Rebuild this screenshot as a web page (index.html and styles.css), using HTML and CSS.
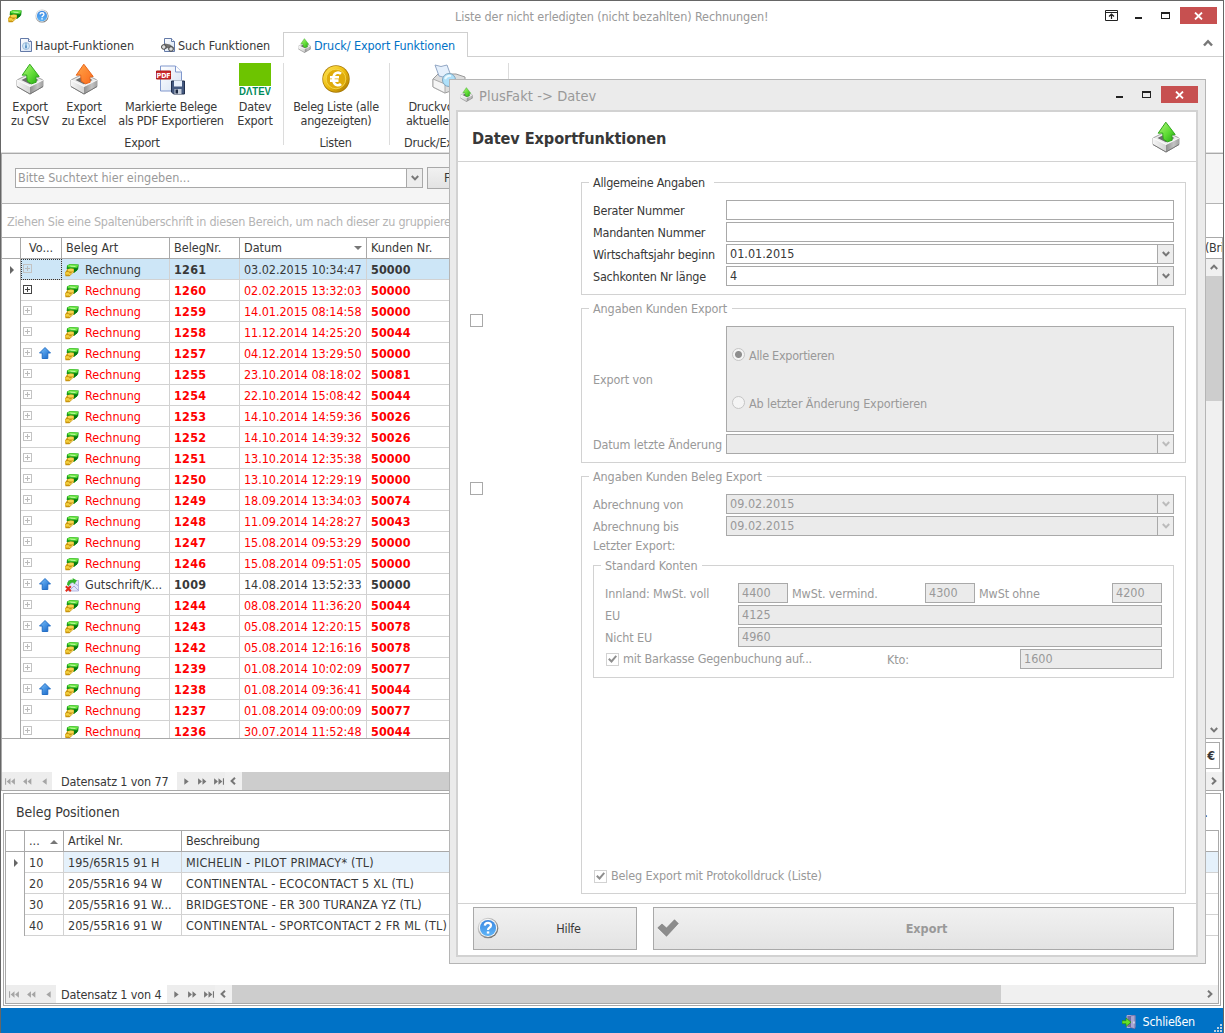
FILE: index.html
```html
<!DOCTYPE html>
<html lang="de">
<head>
<meta charset="utf-8">
<title>Liste der nicht erledigten Rechnungen</title>
<link rel="stylesheet" href="styles.css">
</head>
<body>
<svg class="defs" aria-hidden="true">
  <defs>
    <linearGradient id="gGreen" x1="0" y1="0" x2="1" y2="1"><stop offset="0" stop-color="#b4f57c"/><stop offset=".55" stop-color="#5fdc35"/><stop offset="1" stop-color="#23a512"/></linearGradient>
    <linearGradient id="gOrange" x1="0" y1="0" x2="1" y2="1"><stop offset="0" stop-color="#ffa64a"/><stop offset="1" stop-color="#fb6b1c"/></linearGradient>
    <linearGradient id="gBlue" x1="0" y1="0" x2="0" y2="1"><stop offset="0" stop-color="#3c87e0"/><stop offset="1" stop-color="#5db4f8"/></linearGradient>
    <linearGradient id="gArrow" x1="0" y1="0" x2="1" y2="1"><stop offset="0" stop-color="#7cc4ff"/><stop offset="1" stop-color="#1161c4"/></linearGradient>
    <linearGradient id="gGold" x1="0" y1="0" x2="1" y2="1"><stop offset="0" stop-color="#ffe65a"/><stop offset=".5" stop-color="#edbb0c"/><stop offset="1" stop-color="#a87400"/></linearGradient>
    <linearGradient id="gTray" x1="0" y1="0" x2="1" y2="0"><stop offset="0" stop-color="#8f8f8f"/><stop offset=".6" stop-color="#c4c4c4"/><stop offset="1" stop-color="#a0a0a0"/></linearGradient>
    <linearGradient id="gTrayL" x1="0" y1="0" x2="1" y2="0"><stop offset="0" stop-color="#f6f6f6"/><stop offset="1" stop-color="#d4d4d4"/></linearGradient>
    <linearGradient id="gRim" x1="0" y1="0" x2="1" y2="1"><stop offset="0" stop-color="#ececec"/><stop offset="1" stop-color="#5c5c5c"/></linearGradient>
    <linearGradient id="gPage" x1="0" y1="0" x2="1" y2="1"><stop offset="0" stop-color="#ffffff"/><stop offset="1" stop-color="#d5e1f3"/></linearGradient>
  </defs>
  <symbol id="tray" viewBox="0 0 28 32">
    <path d="M1 17 14 10.500 27 17v6.500L14 31 1 23.500z" fill="#ececec" stroke="#8a8a8a" stroke-width=".8"/>
    <path d="M14 23.500V31l13-7.500V17z" fill="url(#gTray)"/>
    <path d="M1 17v6.500L14 31v-7.500z" fill="url(#gTrayL)"/>
    <path d="M5.500 17 14 12.800l8.500 4.200-8.500 4.300z" fill="#6d6d6d"/>
    <path d="M1 17 14 23.500 27 17" fill="none" stroke="#fff" stroke-width=".9"/>
    <path d="M1 23.500 14 31 27 23.500" fill="none" stroke="#6f6f6f" stroke-width=".9"/>
  </symbol>
  <symbol id="export-green" viewBox="0 0 28 32">
    <use href="#tray"/><path d="M13.800 1.200 23.200 13.500 19.800 14l.4 5.200-4.700 1.600-4.200-2.600-.6-6.200-4.500.2z" fill="url(#gGreen)" stroke="#31a81c"/>
  </symbol>
  <symbol id="export-orange" viewBox="0 0 28 32">
    <use href="#tray"/><path d="M13.800 1.200 23.200 13.500 19.800 14l.4 5.200-4.700 1.600-4.200-2.600-.6-6.200-4.500.2z" fill="url(#gOrange)" stroke="#e8651b"/>
  </symbol>
  <symbol id="money" viewBox="0 0 14 14">
    <path d="M2 2.500 5 1l8.700.5-.5 4.500L9 10 1.700 6z" fill="#16971b"/>
    <path d="M2.300 2.500 5.200 1.200l8.200.5L12 4.800 3.300 4.200z" fill="#67e53f"/>
    <path d="M4.500 2.500 11 2.900 10 4.100 6 3.800z" fill="#b9f79b"/>
    <path d="M9 5.500h4l-1 2L9 9.500z" fill="#067a11"/>
    <path d="M0 9.500 2.500 6 8.500 5.500 9 9l-4.500 4.300L.5 13.200z" fill="#c8930d"/>
    <ellipse cx="5.800" cy="6.900" rx="3.100" ry="1.500" fill="#f5d551"/>
    <ellipse cx="2.500" cy="10.400" rx="2.200" ry="1.300" fill="#f3ce3d"/>
    <path d="M4 11.500q2.500-.3 4-2.800" stroke="#f8dd6a" fill="none"/>
  </symbol>
  <symbol id="credit" viewBox="0 0 14 14">
    <path d="M3.500 2.500h10V13h-10z" fill="#e4e6fb" stroke="#a6a8dc" stroke-width=".8"/>
    <path d="M3 7.500 8 4l5.500 4M4 13l5-5 5 5" fill="none" stroke="#a9acdc"/>
    <path d="M2 7Q2 1.500 8 1.500L7.500 0 12 2.500 9 6.500 8.500 4.500Q5 4 4 8z" fill="#35b62b"/>
    <path d="m.8 8.200 5 5M5.800 8.200l-5 5" stroke="#e22a17" stroke-width="2"/>
  </symbol>
  <symbol id="up" viewBox="0 0 12 12"><path d="M6 .5 11.500 6H8.800v5.500H3.200V6H.5z" fill="url(#gArrow)" stroke="#1a68c2" stroke-width=".9"/></symbol>
  <symbol id="help" viewBox="0 0 24 24">
    <circle cx="12" cy="12" r="11.300" fill="url(#gRim)"/><circle cx="12" cy="11.800" r="10" fill="#f6f6f6"/><circle cx="12" cy="12" r="8.800" fill="url(#gBlue)"/>
    <path d="M8.500 9.300Q8.800 6.300 12 6.300t3.300 2.800Q15.300 10.700 13.500 11.700 12 12.600 12 14.300" fill="none" stroke="#fff" stroke-width="2.400"/><path d="M10.700 15.700h2.700v2.400h-2.700z" fill="#fff"/>
  </symbol>
  <symbol id="doc-info" viewBox="0 0 12 14"><path d="M.5.500h8l3 3v10H.5z" fill="url(#gPage)" stroke="#647aa8"/><path d="M8.500.5v3h3" fill="#fff" stroke="#647aa8"/><circle cx="6" cy="8" r="3.500" fill="#d3e9f9" stroke="#8fb0d0" stroke-width=".8"/><path d="M6 7.300v3M6 5.500v1" stroke="#1863a8" stroke-width="1.200"/></symbol>
  <symbol id="doc-search" viewBox="0 0 15 14"><path d="M3.500.500h7l3 3v10h-10z" fill="url(#gPage)" stroke="#647aa8"/><path d="M10.500.5v3h3" fill="#fff" stroke="#647aa8"/><path d="M.5 8 4 5.500 9 6.500l4 3-1 3-3-.5-2-2-3 1z" fill="#717171"/><circle cx="2.800" cy="9" r="2.300" fill="#ddd" stroke="#444"/><circle cx="10" cy="11" r="2.300" fill="#ddd" stroke="#444"/></symbol>
  <symbol id="pdf" viewBox="0 0 30 30">
    <path d="M4.500 1.500h15l6 6v19h-21z" fill="url(#gPage)" stroke="#8198cd"/><path d="M19.500 1.500v6h6" fill="#fff" stroke="#8198cd"/>
    <path d="M.5 6.500h14v8H.5z" fill="#ce2b2b" stroke="#a91d1d"/><text x="7.600" y="13" class="pdf-text">PDF</text>
    <path d="M15.500 16.500h13v13h-11l-2-2z" fill="#44597f" stroke="#22304e"/><path d="M18 16h8v6h-8z" fill="#e8f0fb"/><path d="M18.500 24.500h7v5h-7z" fill="#c6cedb"/><path d="M19.500 25h2.500v4h-2.500z" fill="#1c2841"/>
  </symbol>
  <symbol id="euro" viewBox="0 0 28 28">
    <circle cx="14" cy="14" r="13.700" fill="#a97a05"/><circle cx="14" cy="14" r="12.900" fill="url(#gGold)"/><circle cx="14" cy="14" r="9.800" fill="#e0ac0b" stroke="#f8dc55" stroke-width=".8"/>
    <path d="M19 8.800Q17.500 7.400 15.200 7.700 11.300 8.300 11.300 14t4 6.200Q17.700 20.400 19 19M8 12.300h9M8 15.600h8.500" fill="none" stroke="#fff" stroke-width="2.600"/>
  </symbol>
  <symbol id="preview" viewBox="0 0 34 30">
    <path d="M1 15 6 10h18l9 3v9L13 29 1 23z" fill="#ddd" stroke="#999"/><path d="M1 15 13 20v9L1 23z" fill="#f5f5f5" stroke="#aaa"/><path d="M3 1Q9 4 15 1l4 11q-6 3-12 0z" fill="#e5f0fc" stroke="#91a6c4"/>
    <path d="m21 20 10 7" stroke="#666" stroke-width="3"/><circle cx="17" cy="16" r="6.500" fill="#aee0f9" stroke="#7ea4be"/><path d="M13 15q2-4 6-3" fill="none" stroke="#eaf9ff" stroke-width="2"/>
  </symbol>
  <symbol id="door" viewBox="0 0 14 14"><path d="M5 .5h8v12H5z" fill="#716fa6" stroke="#aaa9d2"/><path d="M8.500 1 13 0v14l-4.500-1.500z" fill="#a9a6d1" stroke="#5b5892" stroke-width=".6"/><path d="M12 6.500v2" stroke="#fff"/><path d="M0 5.700h4V3l5 4.200-5 4.300V8.700H0z" fill="#65df27" stroke="#258c0d" stroke-width=".7"/></symbol>
  <symbol id="chev-down" viewBox="0 0 8 6"><path d="M.8 1 4 4.400 7.200 1" fill="none" stroke="currentColor" stroke-width="2"/></symbol>
  <symbol id="chev-up" viewBox="0 0 8 6"><path d="M.8 5 4 1.600 7.200 5" fill="none" stroke="currentColor" stroke-width="2"/></symbol>
  <symbol id="chev-left" viewBox="0 0 6 8"><path d="M5 .8 1.600 4 5 7.200" fill="none" stroke="currentColor" stroke-width="2"/></symbol>
  <symbol id="chev-right" viewBox="0 0 6 8"><path d="M1 .8 4.400 4 1 7.200" fill="none" stroke="currentColor" stroke-width="2"/></symbol>
  <symbol id="nav-first" viewBox="0 0 10 6"><path d="M.5 0v6" stroke="currentColor"/><path d="M5 0v6L1.500 3zM9 0v6L5.500 3z" fill="currentColor"/></symbol>
  <symbol id="nav-pageback" viewBox="0 0 10 6"><path d="M4.500 0v6L1 3zM8.500 0v6L5 3z" fill="currentColor"/></symbol>
  <symbol id="nav-prev" viewBox="0 0 10 6"><path d="M7 0v6L3 3z" fill="currentColor"/></symbol>
  <symbol id="nav-next" viewBox="0 0 10 6"><path d="M3 0v6l4-3z" fill="currentColor"/></symbol>
  <symbol id="nav-pagenext" viewBox="0 0 10 6"><path d="M1 0v6l3.500-3zM5 0v6l3.500-3z" fill="currentColor"/></symbol>
  <symbol id="nav-last" viewBox="0 0 10 6"><path d="M9.500 0v6" stroke="currentColor"/><path d="M1 0v6l3.500-3zM5 0v6l3.500-3z" fill="currentColor"/></symbol>
  <symbol id="x" viewBox="0 0 9 8"><path d="m1 .6 7 6.800M8 .6 1 7.400" stroke="#fff" stroke-width="1.900"/></symbol>
  <symbol id="check" viewBox="0 0 9 8"><path d="m.8 3.800 2.700 2.700L8.300.8" fill="none" stroke="#8e8e8e" stroke-width="2"/></symbol>
</svg>

<main class="window">
  <header class="titlebar">
    <svg class="t-money"><use href="#money"/></svg>
    <svg class="t-help"><use href="#help"/></svg>
    <h1>Liste der nicht erledigten (nicht bezahlten) Rechnungen!</h1>
    <svg class="t-pin" viewBox="0 0 13 11"><path d="M.5.500h12v10H.5zM0 2.500h13" fill="none" stroke="#222"/><path d="M6.500 9V4M4 6.500 6.500 4 9 6.500" fill="none" stroke="#222" stroke-width="1.200"/></svg>
    <span class="min"></span><span class="max"></span>
    <span class="close"><svg><use href="#x"/></svg></span>
  </header>

  <nav class="tabs">
    <span class="tab tab-main"><svg class="i12"><use href="#doc-info"/></svg><b>Haupt-Funktionen</b></span>
    <span class="tab tab-search"><svg class="i15"><use href="#doc-search"/></svg><b>Such Funktionen</b></span>
    <span class="tab tab-active"><svg class="i13"><use href="#export-green"/></svg><b>Druck/ Export Funktionen</b></span>
    <span class="tabs-rest"><svg class="collapse"><use href="#chev-up"/></svg></span>
  </nav>

  <section class="ribbon">
    <div class="rgroup g-export">
      <div class="rbuttons">
        <div class="rbtn w54"><svg class="i-tray"><use href="#export-green"/></svg>Export<br>zu CSV</div>
        <div class="rbtn w54"><svg class="i-tray"><use href="#export-orange"/></svg>Export<br>zu Excel</div>
        <div class="rbtn w120"><svg class="i-pdf"><use href="#pdf"/></svg>Markierte Belege<br>als PDF Exportieren</div>
        <div class="rbtn w48"><svg class="i-datev" viewBox="0 0 32 32"><path d="M0 0h32v23H0z" fill="#6dc400"/><text x="0" y="31.800" textLength="32" lengthAdjust="spacingAndGlyphs" class="datev-text">DΛTEV</text></svg>Datev<br>Export</div>
      </div>
      <div class="rcaption">Export</div>
    </div>
    <div class="rgroup g-lists">
      <div class="rbuttons"><div class="rbtn w104"><svg class="i-euro"><use href="#euro"/></svg>Beleg Liste (alle<br>angezeigten)</div></div>
      <div class="rcaption">Listen</div>
    </div>
    <div class="rgroup g-print">
      <div class="rbuttons"><div class="rbtn w118"><svg class="i-preview"><use href="#preview"/></svg>Druckvorschau<br>aktuelle Ansicht</div></div>
      <div class="rcaption">Druck/Export</div>
    </div>
  </section>

  <section class="search">
    <div class="combo search-box"><span class="ph">Bitte Suchtext hier eingeben...</span><span class="drop"><svg><use href="#chev-down"/></svg></span></div>
    <button class="find">Finden</button>
  </section>
  <div class="groupby">Ziehen Sie eine Spaltenüberschrift in diesen Bereich, um nach dieser zu gruppieren.</div>

  <section class="grid">
    <div class="ghead">
      <span class="c0"></span><span class="c1">Vo...</span><span class="c2">Beleg Art</span><span class="c3">BelegNr.</span><span class="c4">Datum<i class="tri-down"></i></span><span class="c5">Kunden Nr.</span><span class="c6">(Bri</span>
    </div>
    <div class="gbody">
      <div class="rows" id="rows"></div>
      <div class="vscroll"><svg><use href="#chev-up"/></svg><i class="vthumb"></i><svg><use href="#chev-down"/></svg></div>
    </div>
    <div class="summary"><span>€</span></div>
    <div class="pager">
      <div class="pbtns off"><svg><use href="#nav-first"/></svg><svg><use href="#nav-pageback"/></svg><svg><use href="#nav-prev"/></svg></div>
      <span class="plabel">Datensatz 1 von 77</span>
      <div class="pbtns"><svg><use href="#nav-next"/></svg><svg><use href="#nav-pagenext"/></svg><svg><use href="#nav-last"/></svg></div>
      <div class="hscroll"><svg><use href="#chev-left"/></svg><i class="thumb-a"></i><svg><use href="#chev-right"/></svg></div>
    </div>
  </section>

  <section class="details">
    <div class="inner">
      <h2>Beleg Positionen<span>.</span></h2>
      <div class="dgrid">
        <div class="drow dhead"><span class="d0"></span><span class="d1">...<i class="tri-up"></i></span><span class="d2">Artikel Nr.</span><span class="d3">Beschreibung</span></div>
        <div class="drow dsel"><span class="d0"><i class="mark"></i></span><span class="d1">10</span><span class="d2">195/65R15 91 H</span><span class="d3">MICHELIN - PILOT PRIMACY* (TL)</span></div>
        <div class="drow"><span class="d0"></span><span class="d1">20</span><span class="d2">205/55R16 94 W</span><span class="d3">CONTINENTAL - ECOCONTACT 5 XL (TL)</span></div>
        <div class="drow"><span class="d0"></span><span class="d1">30</span><span class="d2">205/55R16 91 W...</span><span class="d3 tight">BRIDGESTONE - ER 300 TURANZA YZ (TL)</span></div>
        <div class="drow"><span class="d0"></span><span class="d1">40</span><span class="d2">205/55R16 91 W</span><span class="d3">CONTINENTAL - SPORTCONTACT 2 FR ML (TL)</span></div>
        <div class="dspace"></div>
        <div class="pager dpager">
          <div class="pbtns off"><svg><use href="#nav-first"/></svg><svg><use href="#nav-pageback"/></svg><svg><use href="#nav-prev"/></svg></div>
          <span class="plabel">Datensatz 1 von 4</span>
          <div class="pbtns"><svg><use href="#nav-next"/></svg><svg><use href="#nav-pagenext"/></svg><svg><use href="#nav-last"/></svg></div>
          <div class="hscroll"><svg><use href="#chev-left"/></svg><i class="thumb-b"></i><svg><use href="#chev-right"/></svg></div>
        </div>
      </div>
    </div>
  </section>

  <footer class="status"><svg class="i-door"><use href="#door"/></svg><span>Schließen</span>
    <svg class="grip" viewBox="0 0 9 9"><path d="M6 0h2v2H6zM3 3h2v2H3zM6 3h2v2H6zM0 6h2v2H0zM3 6h2v2H3zM6 6h2v2H6z" fill="#b9cfe0"/></svg>
  </footer>
</main>

<div class="dialog" role="dialog">
  <header class="dlg-title">
    <svg class="i13"><use href="#export-green"/></svg><span>PlusFakt -&gt; Datev</span>
    <i class="min"></i><i class="max"></i><i class="close"><svg><use href="#x"/></svg></i>
  </header>
  <div class="dlg-body">
    <div class="dlg-head"><h2>Datev Exportfunktionen</h2><svg class="i-tray"><use href="#export-green"/></svg></div>
    <div class="dlg-main">
      <div class="checks"><i class="box"></i><i class="box"></i></div>
      <div class="forms">
        <fieldset class="f-general">
          <legend>Allgemeine Angaben</legend>
          <div class="frow"><label>Berater Nummer</label><div class="field"></div></div>
          <div class="frow"><label>Mandanten Nummer</label><div class="field"></div></div>
          <div class="frow"><label>Wirtschaftsjahr beginn</label><div class="field combo">01.01.2015<span class="drop"><svg><use href="#chev-down"/></svg></span></div></div>
          <div class="frow"><label>Sachkonten Nr länge</label><div class="field combo">4<span class="drop"><svg><use href="#chev-down"/></svg></span></div></div>
        </fieldset>
        <fieldset class="f-cust off">
          <legend>Angaben Kunden Export</legend>
          <div class="frow tall"><label>Export von</label><div class="field radios"><span><i class="radio on"></i>Alle Exportieren</span><span><i class="radio"></i>Ab letzter Änderung Exportieren</span></div></div>
          <div class="frow"><label>Datum letzte Änderung</label><div class="field combo"><span class="drop"><svg><use href="#chev-down"/></svg></span></div></div>
        </fieldset>
        <fieldset class="f-docs off">
          <legend>Angaben Kunden Beleg Export</legend>
          <div class="frow"><label>Abrechnung von</label><div class="field combo">09.02.2015<span class="drop"><svg><use href="#chev-down"/></svg></span></div></div>
          <div class="frow"><label>Abrechnung bis</label><div class="field combo">09.02.2015<span class="drop"><svg><use href="#chev-down"/></svg></span></div></div>
          <div class="last-export">Letzter Export:</div>
          <fieldset class="f-accounts">
            <legend>Standard Konten</legend>
            <div class="frow"><label>Innland: MwSt. voll</label><div class="field s">4400</div><label class="l2">MwSt. vermind.</label><div class="field s">4300</div><label class="l2">MwSt ohne</label><div class="field s">4200</div></div>
            <div class="frow"><label>EU</label><div class="field">4125</div></div>
            <div class="frow"><label>Nicht EU</label><div class="field">4960</div></div>
            <div class="frow"><span class="chk"><i class="box"><svg><use href="#check"/></svg></i>mit Barkasse Gegenbuchung auf...</span><label class="l3">Kto:</label><div class="field">1600</div></div>
          </fieldset>
          <div class="chk protocol"><i class="box"><svg><use href="#check"/></svg></i>Beleg Export mit Protokolldruck (Liste)</div>
        </fieldset>
      </div>
    </div>
    <div class="dlg-foot">
      <button class="help-btn"><svg><use href="#help"/></svg><span>Hilfe</span></button>
      <button class="export-btn"><svg viewBox="0 0 22 18"><path d="M.8 8.800 5 5l4.500 4L17.500.700 21.300 4.500 9.500 17.300z" fill="#8c8c8c" stroke="#777" stroke-width=".6"/></svg><span>Export</span></button>
    </div>
  </div>
</div>
<script src="grid.js"></script>
</body>
</html>
```
FILE: styles.css
```css
* { box-sizing: border-box; }
body { margin: 0; width: 1225px; height: 1033px; overflow: hidden; background: #fff; position: relative;
  font: 12.5px/14px "DejaVu Sans Condensed", "DejaVu Sans", sans-serif; font-stretch: condensed; color: #383838; }
.defs { position: absolute; width: 0; height: 0; }
svg { display: block; flex: none; }
i { font-style: normal; }
h1, h2 { margin: 0; font-weight: normal; }
button { font: inherit; color: inherit; padding: 0; border: 1px solid #a9a9a9; background: linear-gradient(#f1f1f1, #e3e3e3); }

.window { width: 1224px; height: 1033px; border: 1px solid #666; border-bottom: 0; display: flex; flex-direction: column; background: #fff; }

/* title bar */
.titlebar { height: 31px; display: flex; align-items: center; padding: 0 6px 2px 0; }
.t-money { width: 14px; height: 14px; margin-left: 7px; }
.t-help { width: 14px; height: 14px; margin-left: 13px; }
.titlebar h1 { font-size: 12.5px; color: #999; margin: 2px auto 0 406px; white-space: nowrap; letter-spacing: -.1px; }
.t-pin { width: 13px; height: 11px; }
.min { width: 7px; height: 2px; background: #222; margin: 4px 0 0 17px; }
.max { width: 9px; height: 7px; border: 1px solid #222; border-top-width: 2px; margin-left: 19px; }
.close { width: 37px; height: 17px; background: #c75050; display: flex; align-items: center; justify-content: center; margin-left: 10px; }
.close svg { width: 9px; height: 8px; }

/* ribbon tabs */
.tabs { height: 25px; display: flex; }
.tab { display: flex; align-items: center; border-bottom: 1px solid #cfcfcf; white-space: nowrap; padding-top: 2px; letter-spacing: -.08px; }
.tab b { font-weight: normal; padding-top: 1px; }
.tab-main { width: 141px; padding-left: 19px; gap: 3px; }
.tab-search { width: 141px; padding-left: 19px; gap: 2px; }
.tab-active { width: 185px; padding-left: 14px; gap: 3px; border: 1px solid #cfcfcf; border-bottom: 0; color: #0072c6; padding-top: 1px; }
.tabs-rest { flex: 1; border-bottom: 1px solid #cfcfcf; display: flex; justify-content: flex-end; }
.collapse { width: 10px; height: 8px; color: #777; margin: 7px 10px 0 0; }
.i12 { width: 12px; height: 14px; }
.i15 { width: 15px; height: 14px; }
.i13 { width: 13px; height: 15px; }

/* ribbon */
.ribbon { height: 97px; display: flex; border-bottom: 1px solid #aaa; box-shadow: inset 0 -1px #ddd; letter-spacing: -.25px; }
.rgroup { margin: 6px 0 8px; border-right: 1px solid #dcdcdc; text-align: center; white-space: nowrap; display: flex; flex-direction: column; }
.g-export { width: 283px; padding-left: 2px; }
.g-lists { width: 106px; }
.g-print { width: 119px; }
.rbuttons { display: flex; height: 72px; flex: none; }
.rbtn { display: flow-root; }
.rbtn svg { margin: 0 auto 5px; height: 32px; }
.rbtn .i-tray, .i-tray { width: 28px; height: 32px; }
.i-pdf { width: 30px; padding-top: 1px; }
.i-datev { width: 32px; }
.i-euro { width: 28px; padding: 2px 0; }
.i-preview { width: 34px; }
.w54 { width: 54px; } .w120 { width: 120px; } .w48 { width: 48px; } .w104 { width: 104px; } .w118 { width: 118px; }
.rcaption { padding: 1px 2px 0 0; }
.g-print .rcaption { text-align: left; padding-left: 14px; }
.pdf-text { font: bold 7px "DejaVu Sans Condensed", sans-serif; letter-spacing: 0; fill: #fff; text-anchor: middle; }
.datev-text { font: bold 10.500px "Liberation Sans", sans-serif; letter-spacing: 0; fill: #008b5a; }

/* search and grouping */
.search { height: 50px; background: #f5f5f5; border-bottom: 1px solid #b4b4b4; border-left: 1px solid #aaa; padding: 14px 0 0 13px; display: flex; gap: 4px; }
.combo { display: flex; align-items: center; justify-content: space-between; }
.search-box { width: 408px; height: 20px; border: 1px solid #a9a9a9; background: #fff; }
.ph { color: #999; padding-left: 2px; }
.drop { width: 16px; margin-left: auto; align-self: stretch; border-left: 1px solid #a9a9a9; background: #ededed; display: flex; align-items: center; justify-content: center; color: #777; }
.drop svg { width: 8px; height: 6px; }
.find { width: 80px; height: 22px; margin-top: -1px; text-align: left; padding-left: 16px; }
.groupby { height: 33px; padding: 11px 0 0 5px; color: #b4b4b4; white-space: nowrap; border-left: 1px solid #aaa; letter-spacing: -.25px; }

/* invoice grid */
.grid { height: 554px; border: 1px solid #a9a9a9; display: flex; flex-direction: column; }
.ghead { height: 21px; display: flex; border-bottom: 1px solid #a9a9a9; }
.ghead span { border-right: 1px solid #a9a9a9; padding: 3px 0 0 4px; white-space: nowrap; overflow: hidden; display: flex; }
.c0 { width: 19px; } .c1 { width: 41px; } .c2 { width: 108px; } .c3 { width: 70px; } .c4 { width: 127px; } .c5 { width: 838px; } .c6 { flex: 1; }
.ghead .c1 { padding-left: 8px; }
.ghead .c6 { border: 0; padding-left: 0; letter-spacing: -.3px; }
.tri-down { border: 4.500px solid transparent; border-top-color: #777; border-bottom: 0; margin: 5px 0 0 72px; height: 5px; }
.gbody { height: 480px; display: flex; border-bottom: 1px solid #a9a9a9; }
.rows { flex: 1; overflow: hidden; }
.row { height: 21px; display: flex; color: #f00; }
.row > span { border-right: 1px solid #d2d2d2; border-bottom: 1px solid #d2d2d2; height: 21px; flex: none; display: flex; align-items: center; white-space: nowrap; padding: 2px 0 0 4px; overflow: hidden; }
.row > .c0 { border-bottom: 0; border-right-color: #a9a9a9; padding: 0 0 0 8px; }
.row > .c1 { padding: 0 0 0 2px; }
.row > .c2 { gap: 6px; padding-left: 3px; }
.row > .c3, .row > .c5 { font-weight: bold; letter-spacing: .1px; }
.row > .c3 { letter-spacing: .25px; }
.row > .c4 { letter-spacing: -.05px; }
.row .ico { width: 14px; height: 14px; margin-bottom: 1px; }
.row .arrow { width: 12px; height: 12px; margin-left: 7px; }
.row.dark { color: #383838; }
.sel > span { background: #cde6f7; }
.sel > .c0 { background: #fff; }
.sel > .c1 { outline: 1px dotted #333; outline-offset: -1px; }
.plus { width: 9px; height: 9px; border: 1px solid #c3c3c3; margin-bottom: 1px; background: linear-gradient(#bbb, #bbb) center/5px 1px no-repeat, linear-gradient(#bbb, #bbb) center/1px 5px no-repeat; }
.plus.on { border-color: #444; background: linear-gradient(#444, #444) center/5px 1px no-repeat, linear-gradient(#444, #444) center/1px 5px no-repeat; }
.mark { border: 4px solid transparent; border-left-color: #666; border-right: 0; height: 8px; }
.vscroll { width: 16px; background: #f0f0f0; display: flex; flex-direction: column; align-items: center; justify-content: space-between; padding: 5px 0; color: #777; }
.vscroll svg { width: 8px; height: 6px; }
.vthumb { width: 16px; height: 125px; background: #cdcdcd; margin: 6px 0 auto; }
.summary { height: 33px; padding: 3px 2px 0 0; display: flex; justify-content: flex-end; }
.summary span { border: 1px solid #a9a9a9; height: 27px; width: 60px; font-weight: bold; text-align: right; padding: 6px 4px 0 0; }
.pager { height: 18px; display: flex; background: #fff; }
.pbtns { display: flex; background: #ededed; align-items: center; color: #777; width: 48px; padding-left: 4px; gap: 5px; }
.pbtns.off { color: #a5a5a5; width: 50px; gap: 6px; padding-left: 3px; }
.pbtns svg { width: 11px; height: 7px; }
.plabel { width: 125px; padding: 3px 0 0 9px; white-space: nowrap; letter-spacing: -.13px; }
.hscroll { flex: 1; background: #f0f0f0; display: flex; align-items: center; color: #777; padding: 0 5px; }
.hscroll svg { width: 6px; height: 8px; }
.thumb-a { width: 700px; height: 18px; background: #cdcdcd; margin: 0 auto 0 6px; }
.thumb-b { width: 769px; height: 18px; background: #cdcdcd; margin: 0 auto 0 6px; }

/* detail grid */
.details { margin: 2px; height: 213px; border: 1px solid #a9a9a9; }
.inner { padding: 0 1px; }
.inner h2 { height: 36px; padding: 11px 11px 0 11px; font-size: 14px; display: flex; justify-content: space-between; letter-spacing: -.05px; }
.dgrid { border: 1px solid #a9a9a9; height: 174px; display: flex; flex-direction: column; }
.drow { height: 21px; display: flex; flex: none; }
.drow span { border-right: 1px solid #d2d2d2; border-bottom: 1px solid #d2d2d2; display: flex; align-items: center; padding: 1px 0 0 4px; white-space: nowrap; }
.drow .d0 { width: 19px; border-bottom: 0; border-right-color: #a9a9a9; padding-left: 8px; }
.drow .d1 { width: 39px; } .drow .d2 { width: 118px; } .drow .d3 { flex: 1; letter-spacing: .21px; border-right: 0; }
.drow .d3.tight { letter-spacing: .05px; }
.drow.dhead span { border-color: #a9a9a9; border-bottom: 1px solid #a9a9a9; padding-top: 0; }
.drow.dhead .d3 { letter-spacing: -.25px; }
.dsel .d2, .dsel .d3 { background: #e5f1fb; }
.tri-up { border: 4.500px solid transparent; border-bottom-color: #777; border-top: 0; height: 5px; margin-left: 10px; }
.dspace { height: 49px; flex: none; }
.dpager .plabel { width: 111px; padding-left: 5px; }

.status { flex: 1; background: #0072c6; color: #fff; display: flex; align-items: center; justify-content: flex-end; padding-top: 3px; letter-spacing: -.25px; }
.i-door { width: 14px; height: 14px; margin-right: 6px; }
.grip { width: 9px; height: 9px; margin: 13px 0 0 19px; }

/* dialog */
.dialog { position: absolute; left: 449px; top: 79px; width: 757px; height: 885px; border: 1px solid #b5b5b5; background: #ebebeb; padding: 0 7px 6px 6px; display: flex; flex-direction: column; }
.dlg-title { height: 30px; flex: none; display: flex; align-items: center; color: #999; font-size: 14.5px; padding: 0 0 1px 4px; }
.dlg-title span { margin: 2px auto 0 6px; letter-spacing: .07px; }
.dlg-body { flex: 1; border: 2px solid #d2d2d2; background: #fff; display: flex; flex-direction: column; }
.dlg-head { height: 50px; flex: none; border-bottom: 1px solid #d2d2d2; display: flex; align-items: center; justify-content: space-between; padding: 0 16px 0 14px; }
.dlg-head h2 { font-weight: bold; font-size: 16.2px; line-height: 20px; padding-top: 5px; letter-spacing: -.1px; }
.dlg-main { height: 741px; flex: none; display: flex; padding: 13px 10px 0 12px; }
.checks { width: 111px; flex: none; display: flex; flex-direction: column; gap: 155px; padding-top: 139px; }
.box { width: 13px; height: 13px; border: 1px solid #a9a9a9; background: #fff; display: flex; align-items: center; justify-content: center; flex: none; }
.box svg { width: 9px; height: 8px; }
.forms { flex: 1; display: flex; flex-direction: column; gap: 6px; }
fieldset { margin: 0; min-width: 0; border: 1px solid #d2d2d2; padding: 0 11px; }
legend { height: 15px; line-height: 15px; padding: 0 5px 0 4px; margin-left: -4px; white-space: nowrap; letter-spacing: -.1px; }
.f-general legend { letter-spacing: -.27px; padding-right: 9px; }
.f-general { height: 120px; }
.f-cust { height: 162px; }
.f-docs { height: 425px; }
.f-general, .f-cust, .f-docs { padding-top: 10px; }
.off { color: #999; }
.frow { display: flex; height: 20px; margin-bottom: 2px; align-items: center; }
.frow label { width: 133px; white-space: nowrap; padding-top: 2px; flex: none; letter-spacing: -.13px; }
.f-general label { letter-spacing: -.23px; }
.field { flex: 1; height: 20px; border: 1px solid #a9a9a9; background: #fff; padding: 2px 0 0 3px; }
.field.combo { padding-top: 0; }
.off .field { background: #ebebeb; }
.off .drop svg { color: #bbb; }
.frow.tall { height: 106px; }
.radios { height: 106px; padding: 22px 0 0 5px; display: flex; flex-direction: column; gap: 34px; letter-spacing: -.13px; }
.radios span { display: flex; gap: 4px; align-items: center; }
.radios span:first-child { letter-spacing: -.27px; }
.radio { width: 13px; height: 13px; border: 1px solid #c5c5c5; border-radius: 50%; background: #f4f4f4; margin-top: -3px; }
.radio.on { background: radial-gradient(circle, #8e8e8e 3px, #f4f4f4 4px); }
.last-export { height: 20px; padding-top: 1px; letter-spacing: -.08px; }
.f-accounts { height: 120px; padding-top: 10px; }
.f-accounts .frow label { padding-top: 1px; }
.field.s { flex: none; width: 50px; }
.frow .l2 { width: 137px; padding-left: 4px; }
.frow .l3 { width: 133px; }
.chk { display: flex; align-items: center; gap: 4px; width: 282px; flex: none; white-space: nowrap; padding-left: 1px; letter-spacing: -.15px; }
.chk .box { border-color: #d2d2d2; }
.protocol { margin-top: 191px; }
.dlg-foot { flex: 1; display: flex; gap: 16px; padding: 3px 22px 0 15px; border-top: 1px solid #d2d2d2; }
.dlg-foot button { height: 43px; display: flex; align-items: center; padding: 0 3px; letter-spacing: -.2px; }
.dlg-foot span { flex: 1; text-align: center; padding-left: 5px; }
.help-btn { width: 164px; }
.help-btn svg { width: 22px; height: 22px; margin-bottom: 1px; }
.export-btn { flex: 1; }
.export-btn svg { width: 22px; height: 18px; margin-bottom: 1px; }
.dlg-foot .export-btn span { font-weight: bold; color: #999; letter-spacing: 0; padding-left: 4px; }
```
FILE: grid.js
```js
// number, date, customer, flags: u = transferred, g = credit note
const records = [
  [1261, "03.02.2015 10:34:47", 50000], [1260, "02.02.2015 13:32:03", 50000],
  [1259, "14.01.2015 08:14:58", 50000], [1258, "11.12.2014 14:25:20", 50044],
  [1257, "04.12.2014 13:29:50", 50000, "u"], [1255, "23.10.2014 08:18:02", 50081],
  [1254, "22.10.2014 15:08:42", 50044], [1253, "14.10.2014 14:59:36", 50026],
  [1252, "14.10.2014 14:39:32", 50026], [1251, "13.10.2014 12:35:38", 50000],
  [1250, "13.10.2014 12:29:19", 50000], [1249, "18.09.2014 13:34:03", 50074],
  [1248, "11.09.2014 14:28:27", 50043], [1247, "15.08.2014 09:53:29", 50000],
  [1246, "15.08.2014 09:51:05", 50000], [1009, "14.08.2014 13:52:33", 50000, "ug"],
  [1244, "08.08.2014 11:36:20", 50044], [1243, "05.08.2014 12:20:15", 50078, "u"],
  [1242, "05.08.2014 12:16:16", 50078], [1239, "01.08.2014 10:02:09", 50077],
  [1238, "01.08.2014 09:36:41", 50044, "u"], [1237, "01.08.2014 09:00:09", 50077],
  [1236, "30.07.2014 11:52:48", 50044]
];
document.getElementById("rows").innerHTML = records.map(([nr, date, customer, flags = ""], i) => {
  const credit = flags.includes("g");
  return `<div class="row${i === 0 ? " sel" : ""}${i === 0 || credit ? " dark" : ""}">
    <span class="c0">${i === 0 ? '<i class="mark"></i>' : ""}</span>
    <span class="c1"><i class="plus${i === 1 ? " on" : ""}"></i>${flags.includes("u") ? '<svg class="arrow"><use href="#up"/></svg>' : ""}</span>
    <span class="c2"><svg class="ico"><use href="#${credit ? "credit" : "money"}"/></svg>${credit ? "Gutschrift/K..." : "Rechnung"}</span>
    <span class="c3">${nr}</span><span class="c4">${date}</span><span class="c5">${customer}</span></div>`;
}).join("");
```
